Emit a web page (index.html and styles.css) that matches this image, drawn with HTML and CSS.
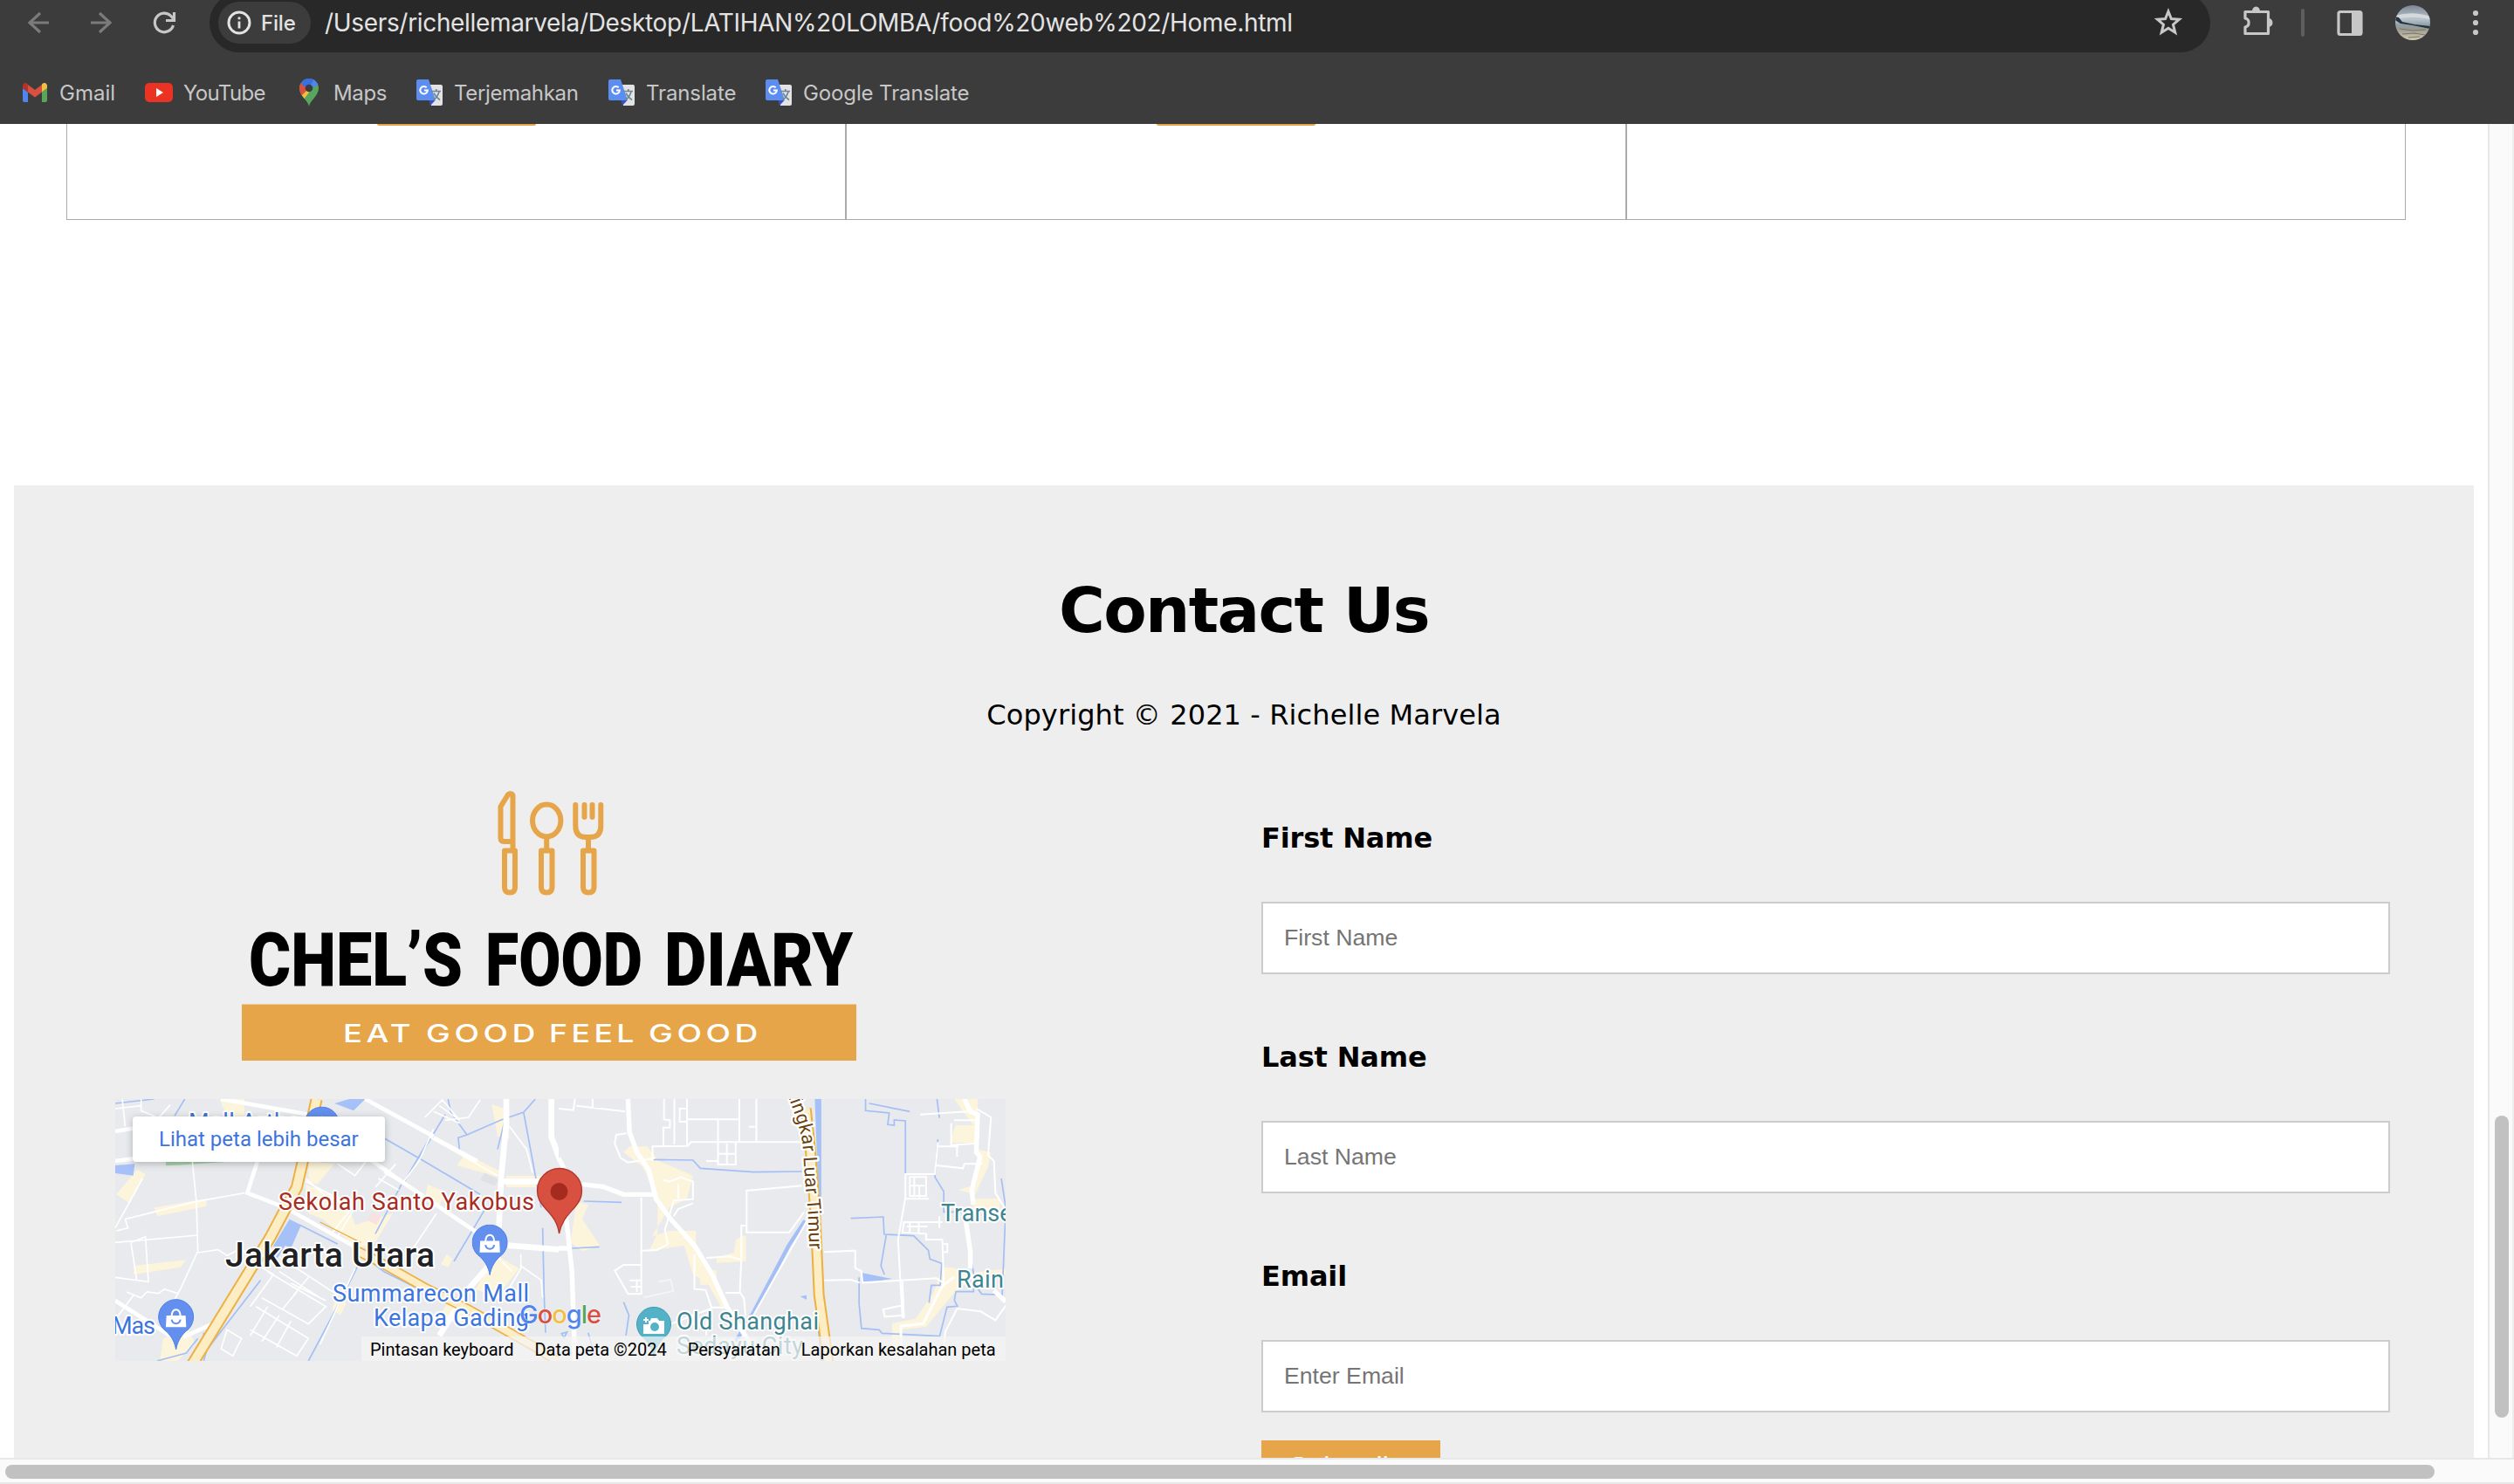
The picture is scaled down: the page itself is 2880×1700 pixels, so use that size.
FILE: index.html
```html
<!DOCTYPE html>
<html lang="id">
<head>
<meta charset="utf-8">
<title>Home</title>
<link rel="stylesheet" href="styles.css">
</head>
<body>
<svg class="defs" aria-hidden="true">
  <symbol id="translate" viewBox="0 0 32 32">
    <path fill="#e3e3e3" d="M13 7h16a2 2 0 0 1 2 2v20a2 2 0 0 1-2 2H18z"/>
    <path fill="#3c50c4" d="M15.500 25h7L17 31z"/>
    <path fill="#5c8df0" d="M3 1h12l8 24H3a2 2 0 0 1-2-2V3a2 2 0 0 1 2-2z"/>
    <path fill="none" stroke="#fff" stroke-width="2" d="M12.700 10.200a4.300 4.300 0 1 0 1.200 3.300H10"/>
    <path fill="none" stroke="#6b8796" stroke-width="1.600" d="M18.500 14.500H29M23.800 12v2.500M27 15c-1 4-3 7-6.500 9.500M21 16.500c1.500 3.500 4 6 7 8"/>
  </symbol>
  <symbol id="shop" viewBox="0 0 124 178">
    <path fill="#638fee" stroke="#4b7de8" stroke-width="3" d="M62 174C58 150 47 129 29 112A60 60 0 1 1 95 112C77 129 66 150 62 174z"/>
    <path fill="#fff" d="M29 57h66l2 40H27z"/>
    <path fill="none" stroke="#fff" stroke-width="6" d="M47 58c2-28 28-28 30 0"/>
    <path fill="none" stroke="#638fee" stroke-width="6" d="M47 71c3 18 27 18 30 0"/>
  </symbol>
</svg>
<header class="chrome">
  <div class="toolbar">
    <svg class="tool dim" viewBox="-36 -26 72 52"><path d="M12 0H-10M2-11-10 0 2 11"/></svg>
    <svg class="tool dim" viewBox="-36 -26 72 52"><path d="M-12 0H10M-2-11 10 0-2 11"/></svg>
    <svg class="tool" viewBox="-36 -26 72 52"><path d="M10.500 3A10.800 10.800 0 1 1 8-7.500L11-4M11.500-12v9.500H2"/></svg>
    <div class="omnibox">
      <div class="chip"><svg class="info" viewBox="-14 -14 28 28"><circle r="12" fill="none" stroke="#e3e3e3" stroke-width="3"/><path stroke="#e3e3e3" stroke-width="2.800" d="M0-1.500V6.500M0-6.500v2.800"/></svg><span class="file">File</span></div>
      <span class="url">/Users/richellemarvela/Desktop/LATIHAN%20LOMBA/food%20web%202/Home.html</span>
      <svg class="star" viewBox="-18 -18 36 36"><path d="M0-13 3.400-4.500 12.500-3.800 5.500 2.200 7.800 11.200 0 6.300-7.800 11.200-5.500 2.200-12.500-3.800-3.400-4.500z"/></svg>
    </div>
    <svg class="tool ext" viewBox="-36 -26 72 52"><path stroke-linejoin="round" d="M-14-12.500H12.500V12.500H-14V5C-8.500 4-8.500-4-14-5z"/><path class="solid" d="M-6-13a4.500 5.500 0 0 1 9 0zM13-5a4.500 5 0 0 1 0 10z"/></svg>
    <i class="divider"></i>
    <svg class="tool panel" viewBox="-36 -26 72 52"><rect x="-13" y="-12.500" width="26" height="26" rx="2"/><path class="solid" d="M2-13h11v27H2z"/></svg>
    <svg class="tool avatar" viewBox="-36 -26 72 52">
      <defs><clipPath id="round"><circle r="20"/></clipPath><linearGradient id="sky" x2="0" y2="1"><stop offset="0" stop-color="#7d8795"/><stop offset=".4" stop-color="#b9c4cc"/><stop offset=".58" stop-color="#8e9da6"/><stop offset=".68" stop-color="#9b998e"/><stop offset="1" stop-color="#d5cab0"/></linearGradient></defs>
      <g clip-path="url(#round)"><path fill="url(#sky)" d="M-20-20h40v40h-40z"/><path fill="#d4dadc" d="M-20-8Q0-14 20-7L20-4Q0-8-20-4z"/><path fill="#27343e" d="M-20-7-16-6-12-1 2 2 20 4V7L0 3-14 1-20-3z"/><path fill="none" stroke="#77766f" stroke-width="1.200" d="M-15 7 0 9 15 8M-12 13 2 12 14 14M-5 17 8 16"/></g>
    </svg>
    <svg class="tool" viewBox="-36 -26 72 52"><g class="solid"><circle cy="-11" r="3.100"/><circle r="3.100"/><circle cy="11" r="3.100"/></g></svg>
  </div>
  <nav class="bookmarks">
    <a><svg viewBox="0 0 32 32"><path fill="#5085ed" d="M2 11l6 4.500V27H4a2 2 0 0 1-2-2z"/><path fill="#58a55c" d="M30 11l-6 4.500V27h4a2 2 0 0 0 2-2z"/><path fill="#d85140" d="M8 7l8 6 8-6v8.500l-8 6-8-6z"/><path fill="#b23328" d="M2 8.500C2 5 5.500 4 8 6.500v9L2 11z"/><path fill="#f1bf42" d="M30 8.500C30 5 26.500 4 24 6.500v9l6-4.500z"/></svg><span>Gmail</span></a>
    <a><svg viewBox="0 0 32 32"><rect y="5" width="32" height="22" rx="5" fill="#ea3323"/><path fill="#fff" d="M13 11v10l8-5z"/></svg><span class="tight">YouTube</span></a>
    <a><svg viewBox="0 0 32 32"><defs><clipPath id="pin"><path d="M16 32C15 25 5 20 5 11a11 11 0 0 1 22 0c0 9-10 14-11 21z"/></clipPath></defs><g clip-path="url(#pin)"><path fill="#58a55c" d="M0 0h32v32H0z"/><path fill="#f1bf42" d="M0 24 16 7v9L9 25z"/><path fill="#d85140" d="M0 0l16 11L7 20H0z"/><path fill="#3a6fe0" d="M4 0h20L14 12 7 5.500z"/><path fill="#5085ed" d="M22 0 16 11 14 14 30 5z"/></g><circle cx="16" cy="11" r="4.300" fill="#3c3c3c"/></svg><span class="snug">Maps</span></a>
    <a><svg><use href="#translate"/></svg><span class="snug">Terjemahkan</span></a>
    <a><svg><use href="#translate"/></svg><span class="near">Translate</span></a>
    <a><svg><use href="#translate"/></svg><span class="near">Google Translate</span></a>
  </nav>
</header>
<div class="window">
  <main class="page">
    <section class="menu"><div class="cell"><i class="more"></i></div><div class="cell"><i class="more"></i></div><div class="cell"></div></section>
    <section class="contact">
      <h1>Contact Us</h1>
      <p class="copy">Copyright © 2021 - Richelle Marvela</p>
      <div class="columns">
        <div class="brand">
          <svg class="logo" viewBox="132 900 1020 359">
            <g fill="none" stroke="#e6a548" stroke-width="6" stroke-linejoin="round">
              <path d="M587.500 972V912c0-3-4-4-6-1l-8 13v36q0 4 4 4h10"/>
              <path d="M578 974.500h12v42q0 6-6 6t-6-6zM620 974.500h12.500v42q0 6-6.250 6t-6.250-6zM668 974.500h12.500v42q0 6-6.250 6t-6.250-6z"/>
              <ellipse cx="626.200" cy="940" rx="16.200" ry="18.500"/>
              <path d="M626.200 960v13M674 960v13"/>
              <path stroke-linecap="round" d="M659.300 922v24q0 13 12 13h5q12 0 12-13v-24M669.500 922v14M678.500 922v14"/>
            </g>
            <g class="name"><text x="285" y="1129" textLength="245" lengthAdjust="spacingAndGlyphs">CHEL’S</text><text x="556" y="1129" textLength="180" lengthAdjust="spacingAndGlyphs">FOOD</text><text x="761" y="1129" textLength="216" lengthAdjust="spacingAndGlyphs">DIARY</text></g>
            <path fill="#e6a548" d="M277 1150.500h704V1215H277z"/>
            <g class="tag"><text x="393" y="1194" textLength="82" lengthAdjust="spacingAndGlyphs">EAT</text><text x="488" y="1194" textLength="130" lengthAdjust="spacingAndGlyphs">GOOD</text><text x="629" y="1194" textLength="102" lengthAdjust="spacingAndGlyphs">FEEL</text><text x="743" y="1194" textLength="130" lengthAdjust="spacingAndGlyphs">GOOD</text></g>
          </svg>
          <div class="map">
            <svg class="tiles" viewBox="0 0 1020 300">
              <defs><clipPath id="west"><path d="M0 0h508v300H0z"/></clipPath></defs>
              <g clip-path="url(#west)"><g transform="translate(-12 -9) scale(.33333)">
                <g fill="#fdf4dc">
                  <path d="M395 27h85v60h-60zM110 270l30 15-55 100-45-30zM170 400l180-30v25l-170 35zM100 600l180-20-20 25-160 25zM200 850l90-30 20 50-60 57h-60zM700 240l90 10-60 70-30-10zM690 320l140 50 30 90 130-40-60 100-60 20-120-100-50-20zM1240 215l120 60-10 20-140-40zM1330 45l60 20v100l-40-10zM1110 320l60 25-20 50-50-20zM1175 560l20 15-15 30-25-10zM1340 560l85 50-80 100-70-30zM800 700l30 30-20 40-30-20zM1190 700l70 40-30 60-80-20zM1380 290h120v40h-120z"/></g>
                <g fill="#a6c1f7"><path d="M790 42l50-15h55l-40 40zM36 255l67-5-5 40-62-8zM635 440l40 20-35 80-20-10-30 50-10-50z"/></g>
                <path fill="#f8e1e0" d="M920 415l30 15-15 30-30-15z"/><path fill="#dfe1e5" d="M1305 280l50 25-15 20-50-20z"/><path fill="#a8d5ac" d="M210 240h200v4l-160 10-40 2z"/>
                <g fill="none" stroke="#a3bff5" stroke-width="5"><path d="M36 42 170 27M275 27 240 85M1180 27 1190 75 1245 150 1360 100 1440 72 1480 27M1050 115 1122 153 1030 310M940 150 1080 230 1290 355M1080 230 1170 80M1220 215 1215 160 1245 150M1440 75 1480 290 1500 400M1375 100 1350 200M1020 320 930 490M1310 400 1200 585M670 460 800 525M880 560 960 620 1100 690M870 600 810 720 700 927M1505 470 1510 700 1515 830M535 650 350 890 340 927M320 850 280 900 180 927M340 830V880"/></g>
                <g fill="none" stroke="#fff" stroke-width="5"><path d="M60 27 70 120M125 27v40l60 25 40-45M36 60l90-10M300 230l15 150 5 170-60 130-60 110M36 470 130 300M70 440 310 380 480 350M36 520 320 495M320 555l70-10 30 20 40-20 80 20M36 640 150 655 140 500 90 520 110 650M70 440l10 30-40 10M75 690l50 20 20-20 40 5 20-15 45 15M40 780 100 700M940 300l70 40M960 280l70 40M1000 250 930 330M930 200 860 290 800 250M1120 160 1350 290M1390 120l60 80 20 80M1130 130l-50 110-60 80M1100 90l60-60 60 70M1170 100l80-10 40-60M1130 70l90 40M1150 50l70 50M1340 560l60 60M1430 560v50l-60 100M1430 600l70 50 5 60M1140 420 1060 540M860 400 800 500 780 490 850 400M500 740 580 630 530 600M560 620l200 120-60 60-160-90M600 620l140 90M600 570l200 130M520 740l180 110-40 60-160-90M560 740l-60 100M600 770l-60 90M640 790l-50 90M660 690l-50 60M700 640l-50 60M640 660l120 60M860 610 740 870M420 820l50 30-30 60-40-25zM690 300l70 60 80 30M690 310 840 390"/></g>
                <g fill="none" stroke="#fff" stroke-width="14"><path d="M400 27 700 80 920 240 1020 310 1300 500M36 240 96 232M36 138 96 128M525 240 490 350 620 400 860 535 940 590M895 27 1130 155M1130 160 1280 240"/><path stroke-width="20" d="M1380 27V110L1362 300 1355 460 1320 600 1250 680 1150 840M1362 310H1500M1385 530 1570 545M1535 27v130l30 80"/><path d="M36 720 240 850M270 845 370 800"/></g>
                <g fill="none"><path stroke="#edb041" stroke-width="42" d="M728 27 690 200 660 330 570 500 300 940"/><path stroke="#fcedc4" stroke-width="30" d="M728 27 690 200 660 330 570 500 300 940"/><path stroke="#edb041" stroke-width="34" d="M860 545 950 590 1100 675 1250 750 1480 880 1560 930"/><path stroke="#fcedc4" stroke-width="24" d="M860 545 950 590 1100 675 1250 750 1480 880 1560 930"/><path stroke="#edb041" stroke-width="4" d="M740 450 880 520"/></g>
              </g></g>
              <g transform="translate(508 -9) scale(.33807 .33333)">
                <path fill="#fdf4dc" d="M240 190l60 0 40 50 115 50-20 80-60 30-60 100 60-20h90v70l40 50 70 130-20 20-50-90-50-30-30-100-120 20 30-60v-120l-50-110-65-50zM475 620l60-5v50h-55zM600 510l35-15v90l-100 5v-20l60-15zM60 380l40 10-20 50 60 90-60 20-40-30zM1340 27h80v150h-95l20-60h60zM1420 200l45 10-10 50-50 110h90v50l-90-10-10-60-40-10 60-20zM1300 605h30l70 20 115-15v20l-110 10-70 60-90 110-90 10-5 97h-20v-120l80-15 60-90z"/>
                <path fill="#a6c1f7" d="M1030 625 1130 645 1030 660zM818 705l22-4v16zM868 27h22v340l-10-5z"/>
                <g fill="none" stroke="#a3bff5" stroke-width="5"><path d="M318 235 455 237 480 265 660 278 825 276M1052 42 1190 70M1040 27v40l80 8-5 40 22 2v-18l38 3v180M1282 27l8 65M1285 165l-10 130 30 50v70h75M990 437l110-5 3 60 100 5 50 50 5 30 40 15-5 75h-30l-8 60M1110 495l-18 105 12 30M1500 300l15 100-12 300-70-3-20-30-12-70M1018 640v90l8 85 60 5 10 12 195 10 25-100 35-3-10-20 5-30h60v-45M85 378 213 382M45 540 138 535M220 725l18 45-10 70M0 900h120l-20-70M10 833l18-5-10 20z"/><path stroke-width="13" d="M835 445 780 530 660 760 600 860M865 540 880 750 892 927"/></g>
                <g fill="none" stroke="#fff" stroke-width="6"><path d="M0 60l50 5 5-38M60 50l165 20M115 27v30M230 145l-35 5-5 30 20 50 25 15 90-15M357 27v70l20 3v25h-22v60M392 27v155M435 27v160M435 60h-25v45H435M435 97H612M540 97v155h60v-75M570 180v70M540 215h60M500 240h40M612 27v150M670 27v150M645 122h20M318 240v-50l120-2 10-13H825M825 325 637 342V485h145l50-70M637 462h-18v110l-5 120 14 20 5 60M280 365v335M283 548l50-2 37-20-10-50 30-100 65-5v-60l-40-15-40 15-20-5M405 320v50M390 430l15-25 50-20M280 597h-60l-30 20 45 80h45M240 650h40M245 672h35M265 650v40M460 560v120l38 3 20 60h50M500 573l80-5 35 10M565 693h50M660 770 850 430M900 553l105-5v60l20 10 5 40 250-15 30 20M900 650l90-2 30 10M1165 650l5 130M1170 735l-70 15 5 25 65-5M1225 80l160-10M1285 175l-10 110h-100v80l-25 145 15 270M1340 100h80M1330 110v75l80-5M1285 190h70M1350 225V180M1280 255l90 10 5-15h60M1190 295h55v65h-55zM1175 370h80M1205 295v65M1190 325h50M1222 325v40M1300 450h-130l-5 35 80 5v20h55l5 150M1190 450v40M1220 450v40M1180 465h70M1305 525h12v28h-12M1415 60l50 30-10 130 20 20 5 110 30 50M1290 430v40M1300 927l10-100 40-80 80 10 50 30 35-50M330 820 520 745M500 790v50"/></g>
                <path fill="none" stroke="#f3f4f6" stroke-width="6" d="M340 655l40-8 8 40-100 22"/>
                <g fill="none" stroke="#fff" stroke-width="16"><path d="M235 27 240 140 265 210 305 270 330 370 380 440 460 530 520 630 570 740 650 870 670 927M80 320 150 328 220 355H330M0 230 20 270M25 430 45 620 55 927M0 540H40"/><path d="M1375 27 1395 70 1420 80 1415 210 1428 225 1400 340 1405 390M1380 450l15 100v60M1475 685l40 38"/><path stroke-width="9" d="M1160 927v-120l75-8 35-70 30-60 40-30"/></g>
                <g fill="none"><path stroke="#edb041" stroke-width="38" d="M838 60 853 200 870 430 882 700 915 940"/><path stroke="#fcedc4" stroke-width="26" d="M838 60 853 200 870 430 882 700 915 940"/></g>
                <path id="ring" fill="none" d="M765-20C790 60 822 120 828 200L835 310 845 420 850 560 852 640"/>
                <text class="halo road"><textPath href="#ring" startOffset="20" textLength="554">Lingkar Luar Timur</textPath></text>
              </g>
              <g class="halo poi blue"><text x="84" y="36" textLength="128">Mall Artha</text><text x="249" y="232" textLength="225">Summarecon Mall</text><text x="296" y="260" textLength="178">Kelapa Gading</text><text x="-4" y="269" textLength="50">Mas</text></g>
              <g class="halo poi teal"><text x="643" y="264" textLength="163">Old Shanghai</text><text x="643" y="292" textLength="145">Sedayu City</text><text x="946" y="140">Transera</text><text x="964" y="216" textLength="54">Rain</text></g>
              <text class="halo poi red" x="187" y="127" textLength="293">Sekolah Santo Yakobus</text>
              <text class="halo city" x="126" y="192" textLength="240">Jakarta Utara</text>
              <use href="#shop" x="49" y="229" width="41.300" height="59.300"/><use href="#shop" x="408.500" y="143.500" width="41.300" height="59.300"/><use href="#shop" x="216" y="8.500" width="41.300" height="59.300"/>
              <path fill="#53b2c8" stroke="#3d9cb3" d="M617 296c-1-8-5-16-11-22a19.500 19.500 0 1 1 22 0c-6 6-10 14-11 22z"/>
              <path fill="#fff" d="M614 251h7l2 3h6v15h-24v-11h6v-4h2zM607 250h2v2h2v2h-2v2h-2v-2h-2v-2h2z"/><circle cx="618" cy="261" r="5" fill="#53b2c8"/>
              <path fill="#d85040" stroke="#b3362b" stroke-width="1.300" d="M508.500 154c-2-14-8-20-16-29-6-7-9-12-9-20a25.500 25.500 0 0 1 51 0c0 8-3 13-9 20-8 9-14 15-17 29z"/><circle cx="508.500" cy="106" r="10" fill="#a52a20"/>
              <text class="google" x="463" y="257" textLength="94"><tspan fill="#5085ed">G</tspan><tspan fill="#d85140">o</tspan><tspan fill="#f1bf42">o</tspan><tspan fill="#5085ed">g</tspan><tspan fill="#58a55c">l</tspan><tspan fill="#d85140">e</tspan></text>
            </svg>
            <a class="larger">Lihat peta lebih besar</a>
            <div class="terms"><span>Pintasan keyboard</span><span>Data peta ©2024</span><span>Persyaratan</span><span>Laporkan kesalahan peta</span></div>
          </div>
        </div>
        <form class="form">
          <label>First Name</label><input placeholder="First Name">
          <label>Last Name</label><input placeholder="Last Name">
          <label>Email</label><input placeholder="Enter Email">
          <button type="button">Subscribe</button>
        </form>
      </div>
    </section>
  </main>
  <div class="vbar"><i></i></div>
  <div class="hbar"><i></i></div>
</div>
</body>
</html>
```
FILE: styles.css
```css
* { box-sizing: border-box; }
body { margin: 0; width: 2880px; height: 1700px; overflow: hidden; background: #fff; font-family: "DejaVu Sans", sans-serif; color: #000; }
svg { display: block; flex: none; }
.defs { position: absolute; width: 0; height: 0; }

.chrome { height: 142px; background: #3c3c3c; font-family: Inter, sans-serif; overflow: hidden; }
.toolbar { height: 60px; display: flex; align-items: flex-start; padding-left: 8px; }
.tool { width: 72px; height: 52px; fill: none; stroke: #c7c7c7; stroke-width: 3.2; }
.tool.dim { stroke: #7b7b7b; }
.tool .solid { fill: #c7c7c7; stroke: none; }
.tool.avatar { stroke: none; }
.omnibox { width: 2292px; height: 68px; margin: -8px 18px 0 16px; border-radius: 34px; background: #282828; display: flex; align-items: center; padding: 0 30px 0 10px; }
.chip { width: 106px; height: 48px; border-radius: 24px; background: #3c3c3c; display: flex; align-items: center; gap: 11px; padding-left: 10px; }
.info { width: 28px; height: 28px; }
.file { color: #e3e3e3; font-size: 24px; font-weight: 500; letter-spacing: -.2px; }
.url { margin-left: 16px; flex: 1; color: #e3e3e3; font-size: 28px; line-height: 36px; letter-spacing: -.33px; white-space: nowrap; }
.star { width: 36px; height: 36px; fill: none; stroke: #c7c7c7; stroke-width: 3; }
.divider { width: 4px; height: 32px; margin: 10px 16px 0 14px; border-radius: 2px; background: #5e5e5e; }
.bookmarks { display: grid; grid-template-columns: 142px 172px 138px 220px 180px 260px; align-items: center; height: 60px; margin-top: 16px; padding-left: 24px; }
.bookmarks a { display: flex; align-items: center; gap: 12px; color: #c7c7c7; font-size: 24px; white-space: nowrap; }
.bookmarks svg { width: 32px; height: 32px; }
.tight { letter-spacing: -.65px; }
.snug { letter-spacing: -.35px; }
.near { letter-spacing: -.12px; }

.window { display: grid; grid-template-columns: 2850px 30px; grid-template-rows: 1528px 30px; }
.page { overflow: hidden; padding: 0 16px; }
.menu { display: flex; width: 2680px; height: 110px; margin-left: 60px; border: solid #aaa; border-width: 0 1px 1px; }
.cell { flex: 1; display: flex; justify-content: center; }
.cell + .cell { border-left: 2px solid #aaa; }
.more { width: 182px; height: 2px; background: #e6a548; border-radius: 0 0 4px 4px; }
.contact { height: 1200px; margin-top: 304px; padding: 101px 96px 0 116px; background: #eee; }
.contact h1 { margin: 0; padding-right: 20px; text-align: center; font-size: 72px; line-height: 84px; letter-spacing: -1.6px; }
.copy { margin: 59px 0 62px; padding-right: 20px; text-align: center; font-size: 32px; line-height: 38px; letter-spacing: .1px; }
.columns { display: grid; grid-template-columns: 1020px 1fr; column-gap: 293px; }
.logo { width: 1020px; height: 359px; }
.name { font: 900 86px Roboto, sans-serif; }
.tag { font: 500 28.500px Inter, sans-serif; letter-spacing: 3.5px; fill: #fff; }
.map { position: relative; width: 1020px; height: 300px; overflow: hidden; background: #e8eaed; font-family: Roboto, sans-serif; }
.tiles { width: 1020px; height: 300px; }
.halo { paint-order: stroke; stroke: #fff; stroke-width: 4px; stroke-linejoin: round; }
.poi { font-size: 27px; }
.blue { fill: #3c74e0; }
.teal { fill: #3c8591; }
.red { fill: #a82c22; }
.city { font-size: 39px; font-weight: 500; fill: #202124; }
.road { font-size: 64px; fill: #6b4210; stroke-width: 14px; }
.google { font: 500 29px Inter, sans-serif; stroke: #fff; stroke-width: 1px; paint-order: stroke; }
.larger { position: absolute; left: 20px; top: 20px; width: 289px; height: 52px; border-radius: 4px; background: #fff; box-shadow: 0 2px 8px rgba(0,0,0,.25); padding-left: 30px; color: #3c74e0; font-size: 24px; line-height: 52px; white-space: nowrap; }
.terms { position: absolute; right: 0; bottom: 0; width: 738px; height: 28px; background: rgba(245,245,245,.72); display: flex; padding-left: 10px; gap: 24px; font-size: 20px; line-height: 30px; white-space: nowrap; }
.form { display: flex; flex-direction: column; align-items: flex-start; padding-top: 41px; }
.form label { font-size: 32px; font-weight: 700; line-height: 38px; letter-spacing: -.15px; margin-bottom: 54px; }
.form input { width: 1293px; height: 83px; margin-bottom: 76px; padding: 0 24px; border: 2px solid #ccc; background: #fff; font: 26.667px "Liberation Sans", sans-serif; }
.form input::placeholder { color: #757575; }
.form button { display: flex; margin-top: -44px; width: 205px; height: 70px; padding: 12px 0 0 32px; border: 0; background: #e6a548; color: #fff; font: 32px/37px "Liberation Sans", sans-serif; align-items: flex-start; }

.vbar { border-left: 2px solid #e8e8e8; border-right: 2px solid #ededed; background: #fafafa; padding: 1136px 0 0 6px; }
.vbar i { display: block; width: 16px; height: 346px; border-radius: 8px; background: #c1c1c1; }
.hbar { grid-column: 1 / 3; border: solid #e8e8e8; border-width: 2px 0; background: #fafafa; padding: 6px 0 0 6px; }
.hbar i { display: block; width: 2783px; height: 16px; border-radius: 8px; background: #c1c1c1; }
```
